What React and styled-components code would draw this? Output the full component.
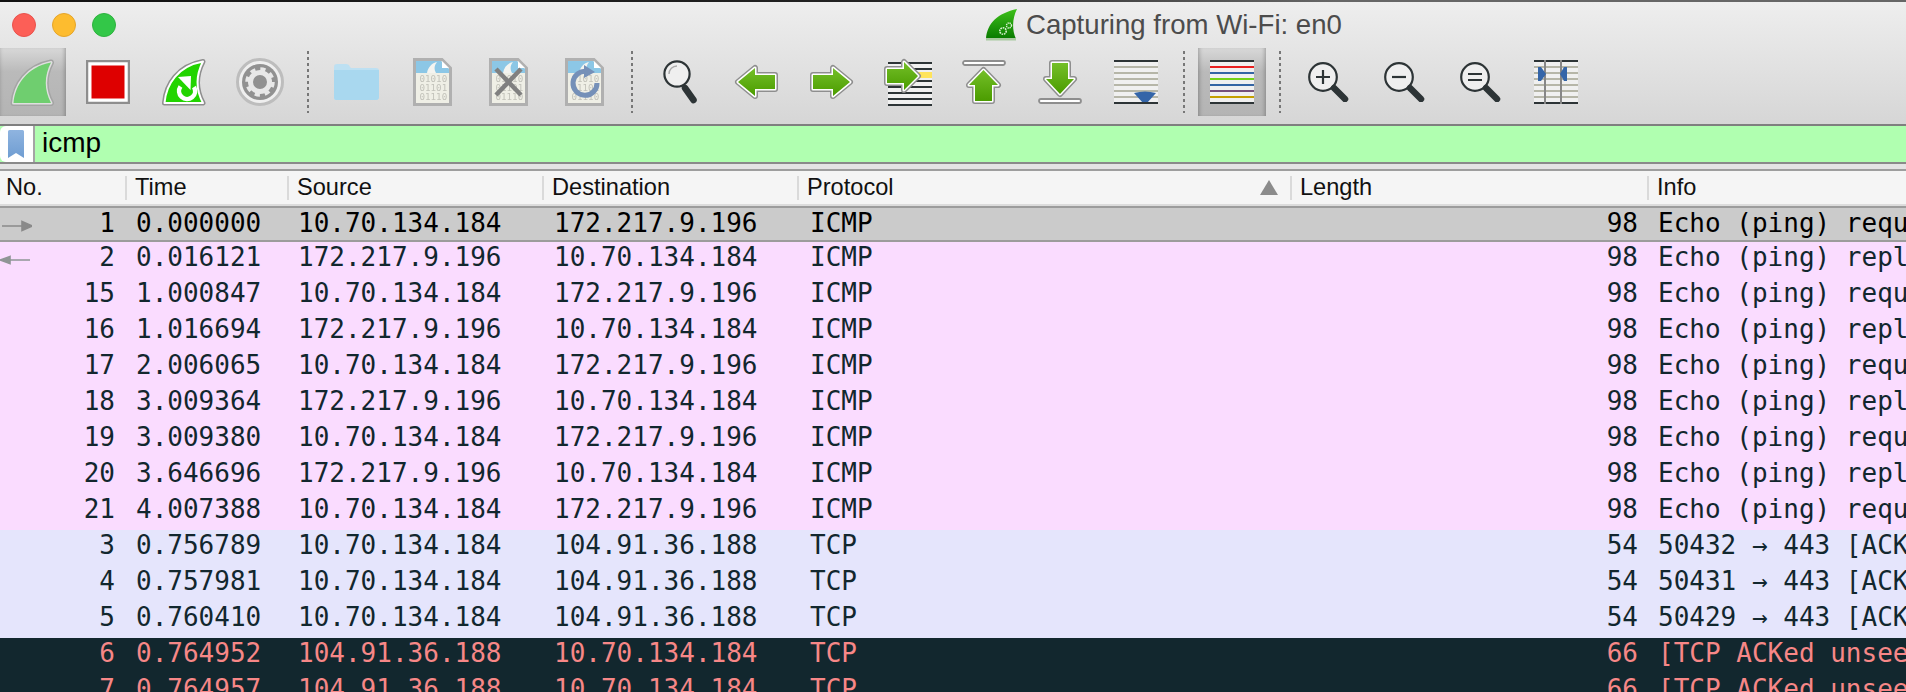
import React from "react";
import styled, { createGlobalStyle } from "styled-components";

const GlobalStyle = createGlobalStyle`
  html, body { margin: 0; padding: 0; height: 100%; overflow: hidden; background: #fff; }
  #root { height: 100%; }
`;

const COLUMNS = "125px 162px 255px 255px 493px 357px minmax(0, 1fr)";

const Window = styled.div`
  height: 692px;
  display: flex;
  flex-direction: column;
  overflow: hidden;
  font-family: "Liberation Sans", Arial, sans-serif;
`;
const Chrome = styled.header`
  border-top: 2px solid;
  border-image: linear-gradient(90deg, #111 0%, #222 45%, #666 70%, #666 100%) 1;
  background: linear-gradient(180deg, #eeeeee 0%, #d6d6d6 100%);
  height: 122px;
  flex: none;
`;
const TitleBar = styled.div`
  height: 46px;
  display: flex;
  align-items: center;
  padding-left: 12px;
`;
const Lights = styled.div`
  display: flex;
  gap: 16px;
`;
const Light = styled.span`
  width: 24px;
  height: 24px;
  border-radius: 50%;
  box-sizing: border-box;
  background: ${(p) => p.$color};
  border: 1px solid ${(p) => p.$edge};
`;
const TitleGroup = styled.div`
  margin-left: 870px;
  display: flex;
  align-items: center;
  gap: 9px;
`;
const TitleText = styled.span`
  font-size: 27.6px;
  color: #4c4c4c;
  white-space: nowrap;
`;
const Toolbar = styled.div`
  height: 68px;
  display: flex;
  gap: 8px;
  margin-left: -2px;
`;
const ToolButton = styled.div`
  width: 68px;
  height: 68px;
  flex: none;
  display: flex;
  align-items: center;
  justify-content: center;
  ${(p) =>
    p.$active &&
    `background: linear-gradient(180deg, #d8d8d8 0%, #bababa 35%, #b4b4b4 100%);
     box-shadow: inset 4px 0 4px -3px rgba(0,0,0,.28), inset -4px 0 4px -3px rgba(0,0,0,.28);`}
`;
const Separator = styled.div`
  width: 12px;
  flex: none;
  display: flex;
  justify-content: center;
  align-items: center;
  &::before {
    content: "";
    width: 2px;
    height: 62px;
    background: repeating-linear-gradient(180deg, #777 0 3px, transparent 3px 6px);
  }
`;
const FilterBar = styled.div`
  height: 40px;
  flex: none;
  box-sizing: border-box;
  display: flex;
  border-top: 2px solid #7f7f7f;
  border-bottom: 2px solid #8a8a8a;
  background: #b0ffb0;
`;
const BookmarkCell = styled.div`
  width: 25px;
  background: #fff;
  border-right: 2px solid #a5a5a5;
  border-radius: 6px 0 0 6px;
  display: flex;
  align-items: center;
  padding-left: 8px;
  margin-right: 7px;
`;
const FilterText = styled.span`
  font-size: 28px;
  line-height: 34px;
  color: #000;
`;
const Spacer = styled.div`
  height: 5px;
  flex: none;
  background: #e4e4e4;
  border-bottom: 2px solid #9e9e9e;
`;
const HeaderRow = styled.div`
  height: 35px;
  flex: none;
  box-sizing: border-box;
  display: grid;
  grid-template-columns: ${COLUMNS};
  background: #f5f5f5;
  border-bottom: 2px solid #dcdcdc;
`;
const HeaderCell = styled.div`
  display: flex;
  align-items: center;
  gap: 8px;
  font-size: 23.6px;
  color: #111;
  padding-left: ${(p) => (p.$first ? "6px" : "0")};
  &::before {
    content: "";
    display: ${(p) => (p.$first ? "none" : "block")};
    width: 2px;
    height: 24px;
    background: #dadada;
  }
`;
const SortMark = styled.span`
  margin-left: auto;
  margin-right: 12px;
  width: 0;
  height: 0;
  border-left: 9px solid transparent;
  border-right: 9px solid transparent;
  border-bottom: 15px solid #8b8b8b;
`;
const ROW_STYLES = {
  selected: "background:#cbcbcb;color:#000;border-top:2px solid #9c9c9c;border-bottom:2px solid #9c9c9c;",
  icmp: "background:#fadcff;color:#12272e;",
  tcp: "background:#e5e5fc;color:#12272e;",
  bad: "background:#12272e;color:#f78787;",
};
const PacketRow = styled.div`
  height: 36px;
  flex: none;
  box-sizing: border-box;
  display: grid;
  grid-template-columns: ${COLUMNS};
  font-family: "DejaVu Sans Mono", monospace;
  font-size: 26px;
  --lift: ${(p) => (p.$kind === "selected" ? "3px" : "7px")};
  ${(p) => ROW_STYLES[p.$kind]}
`;
const Cell = styled.div`
  display: flex;
  align-items: center;
  padding: 0 9px var(--lift) ${(p) => p.$inset || 11}px;
  white-space: pre;
  overflow: hidden;
  line-height: 28px;
  ${(p) => p.$right && "justify-content: flex-end;"}
`;
const NumberCell = styled(Cell)`
  padding: 0 10px var(--lift) 0;
  justify-content: space-between;
`;
const PacketMark = styled.svg`
  flex: none;
  margin-top: 6px;
`;

const Stripes = ({ rows, color = "#b6b6a8", bg = "#f0f0f0" }) => (
  <>
    <rect x="0" y="0" width="44" height="44" fill={bg} />
    {rows.map((r) => (
      <rect key={r} x="0" y={r} width="44" height="2" fill={color} />
    ))}
    <rect x="0" y="0" width="44" height="2" fill="#2d3436" />
    <rect x="0" y="42" width="44" height="2" fill="#2d3436" />
  </>
);

const Outlined = ({ d, fill = "url(#gr)" }) => (
  <>
    <defs>
      <linearGradient id="gr" x1="0" y1="0" x2="0" y2="1">
        <stop offset="0" stopColor="#74bf28" />
        <stop offset="1" stopColor="#4b9c00" />
      </linearGradient>
    </defs>
    <path d={d} fill="none" stroke="#8e8e8e" strokeWidth="6" strokeLinejoin="round" />
    <path d={d} fill="none" stroke="#fff" strokeWidth="3" strokeLinejoin="round" />
    <path d={d} fill={fill} />
  </>
);

const FIN = "M3.5 44 C5 26 17 8 41 3.5 C34 17 34 31 41 44 Z";

const FinActive = () => (
  <svg width="45" height="47" viewBox="0 0 45 47">
    <path d={FIN} fill="none" stroke="#a4a4a4" strokeWidth="6" strokeLinejoin="round" />
    <path d={FIN} fill="none" stroke="#dfdfdf" strokeWidth="3" strokeLinejoin="round" />
    <path d={FIN} fill="#6fce6f" />
  </svg>
);
const StopIcon = () => (
  <svg width="44" height="44" viewBox="0 0 44 44">
    <rect x="1" y="1" width="42" height="42" fill="#fff" stroke="#8e8e8e" strokeWidth="2.5" />
    <rect x="5.5" y="5.5" width="33" height="33" fill="#de0000" />
  </svg>
);
const RestartIcon = () => (
  <svg width="46" height="48" viewBox="0 0 46 48">
    <path d="M3.5 45 C5 26 17 8 42 3.5 C35 17 35 32 42 45 Z" fill="none" stroke="#8e8e8e" strokeWidth="5" strokeLinejoin="round" />
    <path d="M3.5 45 C5 26 17 8 42 3.5 C35 17 35 32 42 45 Z" fill="#22d400" stroke="#fff" strokeWidth="2" strokeLinejoin="round" />
    <path d="M19.5 28.5 A8 8 0 1 0 33 29" fill="none" stroke="#fff" strokeWidth="4.5" />
    <path d="M17 19 L30 18 L29.5 32 Z" fill="#fff" />
  </svg>
);
const OptionsIcon = () => (
  <svg width="48" height="48" viewBox="0 0 48 48">
    <circle cx="24" cy="24" r="22.5" fill="#efefef" stroke="#bdbdbd" strokeWidth="3" />
    <circle cx="24" cy="24" r="18" fill="#919191" />
    <circle cx="24" cy="24" r="9.5" fill="none" stroke="#e8e8e8" strokeWidth="5" />
    <circle cx="24" cy="24" r="13" fill="none" stroke="#e8e8e8" strokeWidth="3.5" strokeDasharray="5.2 5" />
  </svg>
);
const FolderIcon = () => (
  <svg width="46" height="36" viewBox="0 0 46 36" style={{ filter: "blur(0.4px)" }}>
    <path d="M1 3 Q1 0 4 0 H13 Q16 0 17 3 L18 4 H43 Q46 4 46 7 V33 Q46 36 43 36 H3 Q1 36 1 33 Z" fill="#bde0f2" />
    <path d="M1 6 H46 V33 Q46 36 43 36 H3 Q1 36 1 33 Z" fill="#a9d8ef" />
  </svg>
);
const FileBase = ({ children }) => (
  <svg width="39" height="48" viewBox="0 0 39 48">
    <path d="M1.5 1.5 H29 L37.5 10 V46.5 H1.5 Z" fill="#efefe6" stroke="#b0b0b0" strokeWidth="3" />
    <path d="M3 3 H28 L36 11 V15 H3 Z" fill="#8cc7e6" />
    <path d="M14 15 C15 9 19 5 24 4 C21 8 21 11 23 15 Z" fill="#f4f4f0" />
    <path d="M29 3 V10 H36 Z" fill="#fff" />
    <g fontFamily="'DejaVu Sans Mono', monospace" fontSize="9.2" fill="#c2c2ba" style={{ filter: "blur(0.3px)" }}>
      <text x="6.5" y="24">01010</text>
      <text x="6.5" y="33">01101</text>
      <text x="6.5" y="42">01110</text>
    </g>
    {children}
  </svg>
);
const Magnifier = () => (
  <svg width="34" height="44" viewBox="0 0 34 44">
    <circle cx="14" cy="14" r="12.6" fill="#efefef" stroke="#2d3436" strokeWidth="2.2" />
    <path d="M6 14 A8 8 0 0 1 14 6" fill="none" stroke="#aaa" strokeWidth="1.4" />
    <path d="M22 28 L30.5 40" stroke="#2d3436" strokeWidth="6.5" strokeLinecap="round" />
  </svg>
);
const BackIcon = () => (
  <svg width="44" height="36" viewBox="0 0 44 36">
    <Outlined d="M4 18 L21 4 V11 H41 V25 H21 V32 Z" />
  </svg>
);
const ForwardIcon = () => (
  <svg width="44" height="36" viewBox="0 0 44 36">
    <Outlined d="M40 18 L23 4 V11 H3 V25 H23 V32 Z" />
  </svg>
);
const GoToIcon = () => (
  <svg width="48" height="48" viewBox="0 0 48 48">
    <rect x="4" y="4" width="44" height="44" fill="#f0f0f0" />
    {[4, 10, 22, 28, 34, 40, 46].map((y) => (
      <rect key={y} x="4" y={y} width="44" height="2" fill="#2d3436" />
    ))}
    <rect x="4" y="14" width="44" height="6" fill="#ffe45c" />
    <Outlined d="M34 18 L20 4 V11 H3 V25 H20 V32 Z" />
  </svg>
);
const UpIcon = () => (
  <svg width="44" height="44" viewBox="0 0 44 44">
    <rect x="1" y="1" width="42" height="4" rx="2" fill="#fff" stroke="#8e8e8e" strokeWidth="1.8" />
    <Outlined d="M21.5 10 L36 25 H30 V41 H13 V25 H7 Z" />
  </svg>
);
const DownIcon = () => (
  <svg width="44" height="44" viewBox="0 0 44 44">
    <rect x="1" y="39" width="42" height="4" rx="2" fill="#fff" stroke="#8e8e8e" strokeWidth="1.8" />
    <Outlined d="M22 34 L36 19 H30 V3 H14 V19 H8 Z" />
  </svg>
);
const AutoScrollIcon = () => (
  <svg width="44" height="44" viewBox="0 0 44 44">
    <Stripes rows={[6, 12, 18, 24, 30, 36]} />
    <path d="M20 33 Q31 30 42 33 L33 43 Q31 44 29 43 Z" fill="#3465a8" />
    <rect x="0" y="42" width="44" height="2" fill="#2d3436" />
  </svg>
);
const ColorizeIcon = () => (
  <svg width="44" height="44" viewBox="0 0 44 44">
    <rect width="44" height="44" fill="#f0f0f0" />
    {["#2d3436", "#e82020", "#3465a4", "#73d216", "#3465a4", "#75507b", "#c4a000", "#2d3436"].map((c, i) => (
      <rect key={i} x="0" y={i * 6} width="44" height="2" fill={c} />
    ))}
  </svg>
);
const ZoomBase = ({ children }) => (
  <svg width="41" height="40" viewBox="0 0 41 40">
    <circle cx="15" cy="15" r="13.8" fill="#efefef" stroke="#2d3436" strokeWidth="2.2" />
    <path d="M26 26 L37 37" stroke="#2d3436" strokeWidth="6.5" strokeLinecap="round" />
    <g stroke="#2d3436" strokeWidth="2.2">{children}</g>
  </svg>
);
const ResizeIcon = () => (
  <svg width="44" height="44" viewBox="0 0 44 44">
    <Stripes rows={[6, 12, 18, 24, 30, 36]} />
    <rect x="10" y="0" width="2" height="44" fill="#878787" />
    <rect x="26" y="0" width="2" height="44" fill="#878787" />
    <path d="M4 7 H7 L12 14 L7 21 H4 Z" fill="#3465a8" />
    <path d="M33 7 H30 L26 14 L30 21 H33 Z" fill="#3465a8" />
  </svg>
);
const BookmarkIcon = () => (
  <svg width="16" height="28" viewBox="0 0 16 28">
    <defs>
      <linearGradient id="bm" x1="0" y1="0" x2="0" y2="1">
        <stop offset="0" stopColor="#8fb4e0" />
        <stop offset="1" stopColor="#6f9dd2" />
      </linearGradient>
    </defs>
    <path d="M1.5 0 H14.5 Q16 0 16 1.5 V28 L8 23 L0 28 V1.5 Q0 0 1.5 0 Z" fill="url(#bm)" />
  </svg>
);
const TitleFin = () => (
  <svg width="31" height="32" viewBox="0 0 31 32">
    <defs>
      <linearGradient id="tf" x1="0" y1="0" x2="0" y2="1">
        <stop offset="0" stopColor="#3ec01a" />
        <stop offset="1" stopColor="#087a00" />
      </linearGradient>
    </defs>
    <path d="M0 30 C1 14 12 4 31 0 C26 10 26 21 30 30 Z" fill="url(#tf)" />
    <rect x="0" y="29" width="30" height="2.5" fill="#a8c9a0" />
    <circle cx="17" cy="22" r="3.2" fill="none" stroke="#d8f0d0" strokeWidth="1.6" strokeDasharray="1.6 0.8" />
    <circle cx="23" cy="16.5" r="2.5" fill="none" stroke="#d8f0d0" strokeWidth="1.4" strokeDasharray="1.3 0.7" />
  </svg>
);

const ICMP_A = ["10.70.134.184", "172.217.9.196"];
const ICMP_B = ["172.217.9.196", "10.70.134.184"];
const REQ = "Echo (ping) request  id=0x3c05, seq=0/0, ttl=64";
const REP = "Echo (ping) reply    id=0x3c05, seq=0/0, ttl=52";
const TCP_OUT = ["10.70.134.184", "104.91.36.188"];
const TCP_IN = ["104.91.36.188", "10.70.134.184"];
const PACKETS = [
  { kind: "selected", no: 1, t: "0.000000", a: ICMP_A, p: "ICMP", l: 98, i: REQ, mark: "out" },
  { kind: "icmp", no: 2, t: "0.016121", a: ICMP_B, p: "ICMP", l: 98, i: REP, mark: "in" },
  { kind: "icmp", no: 15, t: "1.000847", a: ICMP_A, p: "ICMP", l: 98, i: REQ },
  { kind: "icmp", no: 16, t: "1.016694", a: ICMP_B, p: "ICMP", l: 98, i: REP },
  { kind: "icmp", no: 17, t: "2.006065", a: ICMP_A, p: "ICMP", l: 98, i: REQ },
  { kind: "icmp", no: 18, t: "3.009364", a: ICMP_B, p: "ICMP", l: 98, i: REP },
  { kind: "icmp", no: 19, t: "3.009380", a: ICMP_A, p: "ICMP", l: 98, i: REQ },
  { kind: "icmp", no: 20, t: "3.646696", a: ICMP_B, p: "ICMP", l: 98, i: REP },
  { kind: "icmp", no: 21, t: "4.007388", a: ICMP_A, p: "ICMP", l: 98, i: REQ },
  { kind: "tcp", no: 3, t: "0.756789", a: TCP_OUT, p: "TCP", l: 54, i: "50432 → 443 [ACK] Seq=1 Ack=1 Win=4096 Len=0" },
  { kind: "tcp", no: 4, t: "0.757981", a: TCP_OUT, p: "TCP", l: 54, i: "50431 → 443 [ACK] Seq=1 Ack=1 Win=4096 Len=0" },
  { kind: "tcp", no: 5, t: "0.760410", a: TCP_OUT, p: "TCP", l: 54, i: "50429 → 443 [ACK] Seq=1 Ack=1 Win=4096 Len=0" },
  { kind: "bad", no: 6, t: "0.764952", a: TCP_IN, p: "TCP", l: 66, i: "[TCP ACKed unseen segment] 443 → 50432 [ACK]" },
  { kind: "bad", no: 7, t: "0.764957", a: TCP_IN, p: "TCP", l: 66, i: "[TCP ACKed unseen segment] 443 → 50431 [ACK]" },
];

const Mark = ({ dir }) => (
  <PacketMark width="32" height="14" viewBox="0 0 32 14">
    {dir === "out" ? (
      <path d="M2 7 H22 M22 2.5 L32 7 L22 11.5 Z" stroke="#8a8a8a" strokeWidth="1.6" fill="#8a8a8a" />
    ) : (
      <path d="M30 7 H10 M10 3.5 L0 7 L10 10.5 Z" stroke="#8f9596" strokeWidth="1.6" fill="#8f9596" />
    )}
  </PacketMark>
);

export default function App() {
  return (
    <Window>
      <GlobalStyle />
      <Chrome>
        <TitleBar>
          <Lights>
            <Light $color="#fc5f57" $edge="#e9524c" />
            <Light $color="#fdbc2f" $edge="#e5a52a" />
            <Light $color="#33c748" $edge="#2eb23f" />
          </Lights>
          <TitleGroup>
            <TitleFin />
            <TitleText>Capturing from Wi-Fi: en0</TitleText>
          </TitleGroup>
        </TitleBar>
        <Toolbar>
          <ToolButton $active><FinActive /></ToolButton>
          <ToolButton><StopIcon /></ToolButton>
          <ToolButton><RestartIcon /></ToolButton>
          <ToolButton><OptionsIcon /></ToolButton>
          <Separator />
          <ToolButton><FolderIcon /></ToolButton>
          <ToolButton><FileBase /></ToolButton>
          <ToolButton>
            <FileBase>
              <path d="M7 11 L32 37 M32 11 L7 37" stroke="#808080" strokeWidth="4.5" />
            </FileBase>
          </ToolButton>
          <ToolButton>
            <FileBase>
              <path d="M22 13.5 A12 12 0 1 0 32 25" fill="none" stroke="#7590b8" strokeWidth="5" />
              <path d="M19 7 L30 14 L19 20 Z" fill="#7590b8" />
            </FileBase>
          </ToolButton>
          <Separator />
          <ToolButton><Magnifier /></ToolButton>
          <ToolButton><BackIcon /></ToolButton>
          <ToolButton><ForwardIcon /></ToolButton>
          <ToolButton><GoToIcon /></ToolButton>
          <ToolButton><UpIcon /></ToolButton>
          <ToolButton><DownIcon /></ToolButton>
          <ToolButton><AutoScrollIcon /></ToolButton>
          <Separator />
          <ToolButton $active><ColorizeIcon /></ToolButton>
          <Separator />
          <ToolButton>
            <ZoomBase><path d="M8 15 H22 M15 8 V22" /></ZoomBase>
          </ToolButton>
          <ToolButton>
            <ZoomBase><path d="M8 15 H22" /></ZoomBase>
          </ToolButton>
          <ToolButton>
            <ZoomBase><path d="M8 12 H22 M8 18 H22" /></ZoomBase>
          </ToolButton>
          <ToolButton><ResizeIcon /></ToolButton>
        </Toolbar>
      </Chrome>
      <FilterBar>
        <BookmarkCell><BookmarkIcon /></BookmarkCell>
        <FilterText>icmp</FilterText>
      </FilterBar>
      <Spacer />
      <HeaderRow>
        <HeaderCell $first>No.</HeaderCell>
        <HeaderCell>Time</HeaderCell>
        <HeaderCell>Source</HeaderCell>
        <HeaderCell>Destination</HeaderCell>
        <HeaderCell>Protocol<SortMark /></HeaderCell>
        <HeaderCell>Length</HeaderCell>
        <HeaderCell>Info</HeaderCell>
      </HeaderRow>
      {PACKETS.map((r) => (
        <PacketRow key={r.no} $kind={r.kind}>
          <NumberCell>
            {r.mark ? <Mark dir={r.mark} /> : <span />}
            <span>{r.no}</span>
          </NumberCell>
          <Cell>{r.t}</Cell>
          <Cell>{r.a[0]}</Cell>
          <Cell $inset={12}>{r.a[1]}</Cell>
          <Cell $inset={13}>{r.p}</Cell>
          <Cell $right>{r.l}</Cell>
          <Cell>{r.i}</Cell>
        </PacketRow>
      ))}
    </Window>
  );
}
